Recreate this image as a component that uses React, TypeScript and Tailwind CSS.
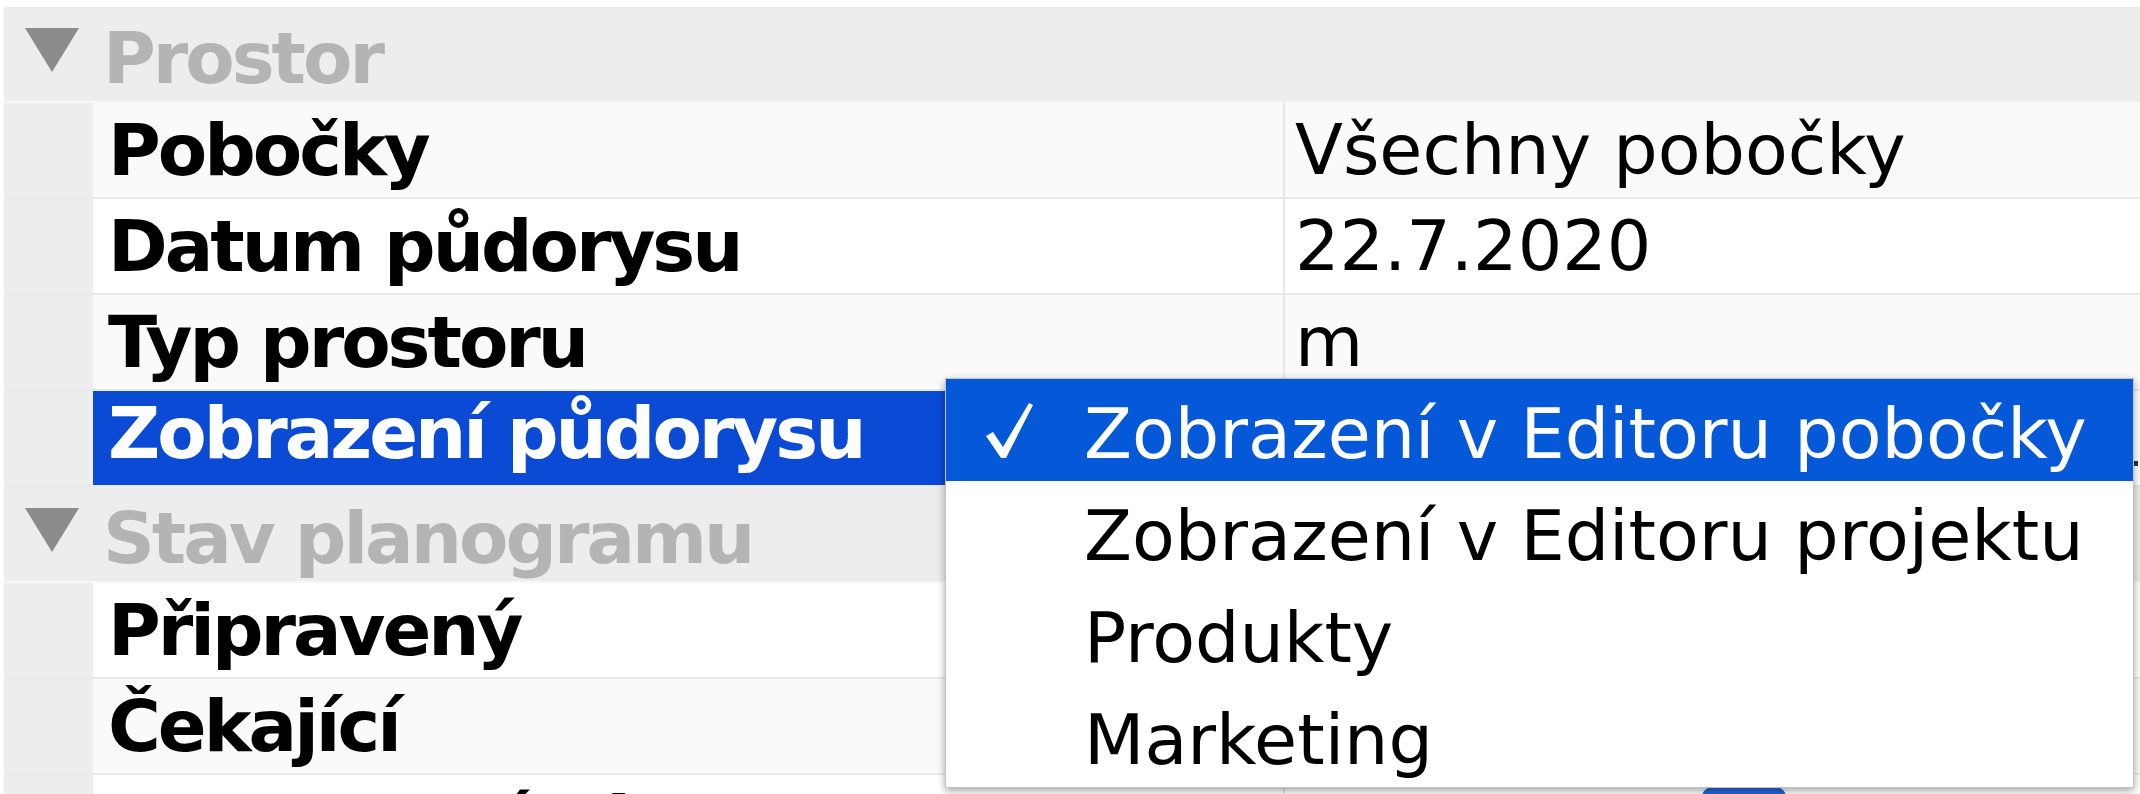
import React from 'react'

type Row =
  | { kind: 'group'; title: string }
  | { kind: 'prop'; label: string; value?: string; shade?: boolean; selected?: boolean; check?: boolean }

const rows: Row[] = [
  { kind: 'group', title: 'Prostor' },
  { kind: 'prop', label: 'Pobočky', value: 'Všechny pobočky', shade: true },
  { kind: 'prop', label: 'Datum půdorysu', value: '22.7.2020' },
  { kind: 'prop', label: 'Typ prostoru', value: 'm', shade: true },
  { kind: 'prop', label: 'Zobrazení půdorysu', selected: true },
  { kind: 'group', title: 'Stav planogramu' },
  { kind: 'prop', label: 'Připravený', check: true },
  { kind: 'prop', label: 'Čekající', check: true, shade: true },
  { kind: 'prop', label: 'Ignorovaný planogram', check: true },
]

const options = [
  'Zobrazení v Editoru pobočky',
  'Zobrazení v Editoru projektu',
  'Produkty',
  'Marketing',
]

function GroupRow({ title }: { title: string }) {
  return (
    <div className="flex items-start h-[96px] shrink-0 bg-[#ededed] border-b-2 border-[#f7f7f7]">
      <svg width="54" height="44" viewBox="0 0 54 44" className="mt-[21px] ml-[21px] shrink-0">
        <polygon points="0,0 54,0 27,44" fill="#8b8b8b" />
      </svg>
      <span className="ml-[24px] mt-[15px] leading-none font-bold text-[72px] tracking-[-3px] text-[#b4b4b4] whitespace-nowrap">
        {title}
      </span>
    </div>
  )
}

function PropRow({ row }: { row: Extract<Row, { kind: 'prop' }> }) {
  const bg = row.shade ? 'bg-[#fafafa]' : 'bg-white'
  return (
    <div className="flex h-[96px] shrink-0 border-b-2 border-[#e9e9e9]">
      <div className="w-[89px] shrink-0 bg-[#ededed]" />
      <div
        className={
          row.selected
            ? 'w-[1192px] shrink-0 flex items-center pl-[15px] pb-[10px] bg-[#0a4ad5] text-white'
            : `w-[1192px] shrink-0 flex items-center pl-[15px] border-r-2 border-[#e7e7e7] text-black ${bg}`
        }
      >
        <span className="font-bold text-[72px] tracking-[-3px] whitespace-nowrap">{row.label}</span>
      </div>
      <div className={`flex-1 flex items-center pl-[10px] relative ${row.selected ? 'bg-white' : bg}`}>
        {row.value && <span className="text-[70px] text-black whitespace-nowrap">{row.value}</span>}
        {row.check && (
          <div className="absolute left-[417px] top-[12px] w-[84px] h-[70px] rounded-[10px] bg-[#1f66d8]" />
        )}
        {row.selected && <div className="absolute right-[2px] top-[70px] w-[4px] h-[5px] bg-[#333]" />}
      </div>
    </div>
  )
}

export default function App() {
  return (
    <div
      className="relative w-[2140px] h-[794px] overflow-hidden bg-white"
      style={{ fontFamily: '"DejaVu Sans", "Liberation Sans", sans-serif' }}
    >
      <div className="flex flex-col pt-[7px] pl-[4px]">
        {rows.map((row, i) =>
          row.kind === 'group' ? <GroupRow key={i} title={row.title} /> : <PropRow key={i} row={row} />
        )}
      </div>

      {/* combo box popup */}
      <div className="absolute left-[945px] top-[378px] w-[1189px] bg-white border border-[#c2c2c2] shadow-[0_3px_8px_rgba(0,0,0,0.35)]">
        {options.map((opt, i) => (
          <div
            key={opt}
            className={`relative h-[102px] flex items-center pt-[8px] pl-[138px] text-[70px] whitespace-nowrap ${
              i === 0 ? 'bg-[#0558d8] text-white' : 'text-black'
            }`}
          >
            {i === 0 && (
              <svg width="47" height="55" viewBox="0 0 47 55" className="absolute left-[40px] top-[24px]">
                <path d="M0 33 L7 29 L17 44 L43 0 L47 2 L20 55 L15 55 Z" fill="white" />
              </svg>
            )}
            {opt}
          </div>
        ))}
      </div>
    </div>
  )
}
